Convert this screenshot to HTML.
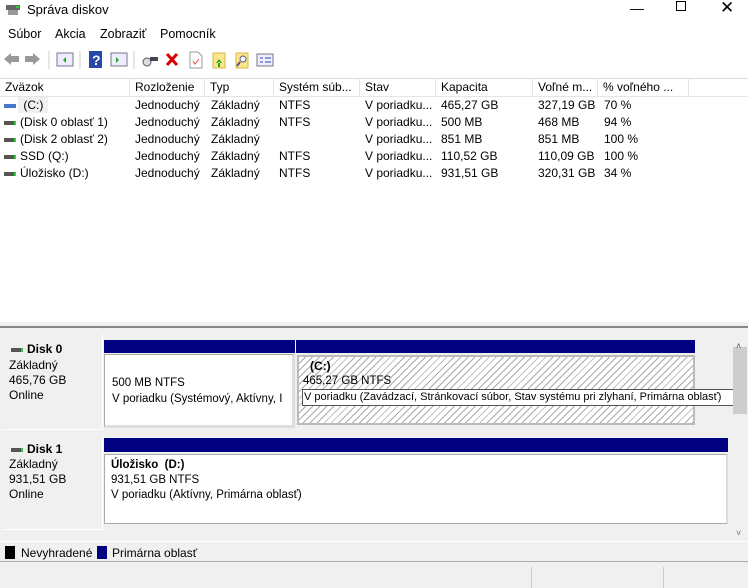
<!DOCTYPE html>
<html><head><meta charset="utf-8"><style>
*{margin:0;padding:0;box-sizing:border-box}
body{width:748px;height:588px;overflow:hidden;background:#f0f0f0;font-family:"Liberation Sans",sans-serif;font-size:12px;color:#000;position:relative}
.a{position:absolute;white-space:nowrap}
.hd{position:absolute;top:79px;height:18px;border-right:1px solid #e5e5e5;padding-left:5px;line-height:17px;background:#fff}
.r{position:absolute;height:17px;line-height:17px}
.di{display:inline-block;width:12px;height:4px;background:#555;border-right:2px solid #3c3;vertical-align:middle;margin-right:4px}
.hatch{background:repeating-linear-gradient(135deg,#fff 0 4px,#aaa 4px 5px)}
</style></head><body>
<div class="a" style="left:0;top:0;width:748px;height:322px;background:#fff"></div>
<svg class="a" style="left:5px;top:4px" width="16" height="12"><rect x="1" y="1" width="14" height="5" fill="#666"/><rect x="3" y="6" width="10" height="5" fill="#999"/><rect x="11" y="2" width="3" height="2" fill="#3c3"/></svg>
<div class="a" style="left:27px;top:2px;font-size:13px">Správa diskov</div>
<div class="a" style="left:630px;top:0;font-size:14px">&#8212;</div>
<div class="a" style="left:676px;top:1px;width:10px;height:10px;border:1px solid #000"></div>
<div class="a" style="left:720px;top:-2px;font-size:17px">&#10005;</div>
<div class="a" style="left:8px;top:27px;font-size:12.5px">Súbor</div>
<div class="a" style="left:55px;top:27px;font-size:12.5px">Akcia</div>
<div class="a" style="left:100px;top:27px;font-size:12.5px">Zobraziť</div>
<div class="a" style="left:160px;top:27px;font-size:12.5px">Pomocník</div>
<svg class="a" style="left:0;top:48px" width="280" height="24">
<path d="M4 11l7-6v3h8v6h-8v3z" fill="#999"/><path d="M40 11l-7-6v3h-8v6h8v3z" fill="#999"/>
<line x1="49" y1="3" x2="49" y2="21" stroke="#ccc"/>
<rect x="57" y="5" width="16" height="13" fill="#eef" stroke="#778"/><path d="M66 9l-3 3 3 3z" fill="#2a2"/>
<line x1="80" y1="3" x2="80" y2="21" stroke="#ccc"/>
<rect x="89" y="3" width="13" height="17" fill="#2a46a8"/><text x="92" y="17" fill="#fff" font-size="14" font-weight="bold" font-family="Liberation Sans">?</text>
<rect x="111" y="5" width="16" height="13" fill="#eef" stroke="#778"/><path d="M116 9l3 3-3 3z" fill="#2a2"/>
<line x1="134" y1="3" x2="134" y2="21" stroke="#ccc"/>
<circle cx="147" cy="14" r="4" fill="#ddd" stroke="#556"/><rect x="150" y="9" width="8" height="4" fill="#445"/>
<path d="M167 6l10 11M177 6l-10 11" stroke="#d00" stroke-width="3"/>
<path d="M190 4h8l4 4v12h-12z" fill="#fff" stroke="#999"/><path d="M193 13l2 3 4-5" stroke="#e44" fill="none"/>
<rect x="213" y="5" width="12" height="15" fill="#fde58a" stroke="#d9b84a"/><path d="M219 11l-3 4h6z M218 14h2v5h-2z" fill="#2a2"/>
<rect x="236" y="5" width="12" height="15" fill="#fde58a" stroke="#d9b84a"/><circle cx="243" cy="11" r="3" fill="#fff" stroke="#558"/><path d="M240 14l-3 4" stroke="#558" stroke-width="2"/>
<rect x="257" y="6" width="16" height="12" fill="#eef" stroke="#778"/><path d="M260 10h3M265 10h6M260 14h3M265 14h6" stroke="#2a46a8"/>
</svg>
<div class="a" style="left:0;top:78px;width:748px;height:1px;background:#ddd"></div>
<div class="hd" style="left:0;width:130px">Zväzok</div>
<div class="hd" style="left:130px;width:75px">Rozloženie</div>
<div class="hd" style="left:205px;width:69px">Typ</div>
<div class="hd" style="left:274px;width:86px">Systém súb...</div>
<div class="hd" style="left:360px;width:76px">Stav</div>
<div class="hd" style="left:436px;width:97px">Kapacita</div>
<div class="hd" style="left:533px;width:65px">Voľné m...</div>
<div class="hd" style="left:598px;width:91px">% voľného ...</div>
<div class="a" style="left:0;top:96px;width:748px;height:1px;background:#e5e5e5"></div>
<div class="a" style="left:18px;top:97px;width:30px;height:16px;background:#f0f0f0"></div>
<div class="r" style="left:4px;top:97px"><span class="di" style="background:#4a78c8;border-right-color:#4a78c8"></span> (C:)</div>
<div class="r" style="left:4px;top:114px"><span class="di"></span>(Disk 0 oblasť 1)</div>
<div class="r" style="left:4px;top:131px"><span class="di"></span>(Disk 2 oblasť 2)</div>
<div class="r" style="left:4px;top:148px"><span class="di"></span>SSD (Q:)</div>
<div class="r" style="left:4px;top:165px"><span class="di"></span>Úložisko (D:)</div>
<div class="r" style="left:135px;top:97px">Jednoduchý</div><div class="r" style="left:211px;top:97px">Základný</div><div class="r" style="left:279px;top:97px">NTFS</div><div class="r" style="left:365px;top:97px">V poriadku...</div><div class="r" style="left:441px;top:97px">465,27 GB</div><div class="r" style="left:538px;top:97px">327,19 GB</div><div class="r" style="left:604px;top:97px">70 %</div>
<div class="r" style="left:135px;top:114px">Jednoduchý</div><div class="r" style="left:211px;top:114px">Základný</div><div class="r" style="left:279px;top:114px">NTFS</div><div class="r" style="left:365px;top:114px">V poriadku...</div><div class="r" style="left:441px;top:114px">500 MB</div><div class="r" style="left:538px;top:114px">468 MB</div><div class="r" style="left:604px;top:114px">94 %</div>
<div class="r" style="left:135px;top:131px">Jednoduchý</div><div class="r" style="left:211px;top:131px">Základný</div><div class="r" style="left:365px;top:131px">V poriadku...</div><div class="r" style="left:441px;top:131px">851 MB</div><div class="r" style="left:538px;top:131px">851 MB</div><div class="r" style="left:604px;top:131px">100 %</div>
<div class="r" style="left:135px;top:148px">Jednoduchý</div><div class="r" style="left:211px;top:148px">Základný</div><div class="r" style="left:279px;top:148px">NTFS</div><div class="r" style="left:365px;top:148px">V poriadku...</div><div class="r" style="left:441px;top:148px">110,52 GB</div><div class="r" style="left:538px;top:148px">110,09 GB</div><div class="r" style="left:604px;top:148px">100 %</div>
<div class="r" style="left:135px;top:165px">Jednoduchý</div><div class="r" style="left:211px;top:165px">Základný</div><div class="r" style="left:279px;top:165px">NTFS</div><div class="r" style="left:365px;top:165px">V poriadku...</div><div class="r" style="left:441px;top:165px">931,51 GB</div><div class="r" style="left:538px;top:165px">320,31 GB</div><div class="r" style="left:604px;top:165px">34 %</div>
<div class="a" style="left:0;top:322px;width:748px;height:6px;background:#f0f0f0;border-bottom:2px solid #888"></div>
<div class="a" style="left:2px;top:334px;width:101px;height:96px;border-right:1px solid #fff;border-bottom:1px solid #fff;background:#f0f0f0"></div>
<div class="a" style="left:11px;top:342px;font-weight:bold"><span class="di" style="width:12px"></span>Disk 0</div>
<div class="a" style="left:9px;top:358px;line-height:15px">Základný<br>465,76 GB<br>Online</div>
<div class="a" style="left:104px;top:340px;width:191px;height:13px;background:#000080"></div>
<div class="a" style="left:296px;top:340px;width:399px;height:13px;background:#000080"></div>
<div class="a" style="left:104px;top:354px;width:191px;height:74px;background:#fff;border:1px solid #aaa;border-right:3px solid #ddd;border-bottom:3px solid #ddd"></div>
<div class="a" style="left:112px;top:375px;line-height:16px;font-size:11.5px">500 MB NTFS<br>V poriadku (Systémový, Aktívny, I</div>
<div class="a hatch" style="left:297px;top:355px;width:398px;height:70px;border:2px solid #bbb"></div>
<div class="a" style="left:310px;top:359px;font-weight:bold">(C:)</div>
<div class="a" style="left:303px;top:375px;font-size:11.5px">465,27 GB NTFS</div>
<div class="a" style="left:302px;top:389px;width:445px;overflow:hidden;background:#fff;border:1px solid #555;padding:0 1px;line-height:15px;font-size:11px">V poriadku (Zavádzací, Stránkovací súbor, Stav systému pri zlyhaní, Primárna oblasť)</div>
<div class="a" style="left:2px;top:434px;width:101px;height:96px;border-right:1px solid #fff;border-bottom:1px solid #fff;background:#f0f0f0"></div>
<div class="a" style="left:11px;top:442px;font-weight:bold"><span class="di"></span>Disk 1</div>
<div class="a" style="left:9px;top:457px;line-height:15px">Základný<br>931,51 GB<br>Online</div>
<div class="a" style="left:104px;top:438px;width:624px;height:14px;background:#000080"></div>
<div class="a" style="left:104px;top:454px;width:624px;height:70px;background:#fff;border:1px solid #aaa;border-right:2px solid #ddd"></div>
<div class="a" style="left:111px;top:458px;line-height:15px;font-size:11.5px"><b>Úložisko&nbsp; (D:)</b><br>931,51 GB NTFS<br>V poriadku (Aktívny, Primárna oblasť)</div>
<div class="a" style="left:733px;top:347px;width:14px;height:67px;background:#cdcdcd"></div>
<div class="a" style="left:736px;top:341px;font-size:9px;color:#555">&#708;</div>
<div class="a" style="left:736px;top:528px;font-size:9px;color:#777">&#709;</div>
<div class="a" style="left:0;top:541px;width:748px;height:21px;border-top:1px solid #fff;border-bottom:1px solid #aaa"></div>
<div class="a" style="left:5px;top:546px;width:10px;height:13px;background:#000"></div>
<div class="a" style="left:21px;top:546px">Nevyhradené</div>
<div class="a" style="left:97px;top:546px;width:10px;height:13px;background:#000080"></div>
<div class="a" style="left:112px;top:546px">Primárna oblasť</div>
<div class="a" style="left:531px;top:567px;width:1px;height:21px;background:#ccc"></div>
<div class="a" style="left:663px;top:567px;width:1px;height:21px;background:#ccc"></div>
</body></html>
